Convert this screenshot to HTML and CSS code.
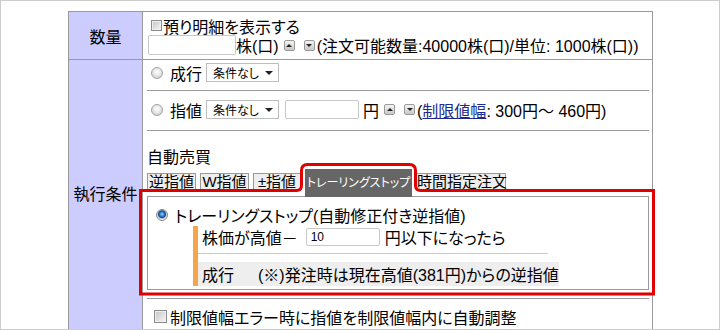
FILE: index.html
```html
<!DOCTYPE html>
<html lang="ja">
<head>
    <meta charset="UTF-8">
    <title>注文入力</title>
    <link rel="stylesheet" href="styles.css">
</head>
<body>
<div class="frame">
    <table class="order">
        <tr class="row-qty">
            <th>数量</th>
            <td>
                <div class="line line-top"><span class="chk"></span>預り明細を表示する</div>
                <div class="line line-qty">
                    <input class="txt qty-input" type="text">株(口)<span class="spin up"></span><span class="spin down"></span><span class="note">(注文可能数量:40000株(口)/単位: 1000株(口))</span>
                </div>
            </td>
        </tr>
        <tr class="row-exec">
            <th>執行条件</th>
            <td>
                <div class="sub sub-market">
                    <span class="radio"></span><span class="opt">成行</span><span class="select">条件なし<i></i></span>
                </div>
                <div class="sub sub-limit">
                    <span class="radio"></span><span class="opt">指値</span><span class="select">条件なし<i></i></span><input class="txt price-input" type="text"><span class="yen">円</span><span class="spin up"></span><span class="spin down"></span><span class="note">(<a href="#">制限値幅</a>: 300円～ 460円)</span>
                </div>
                <div class="sub sub-auto">
                    <div class="auto-title">自動売買</div>
                    <ul class="tabs">
                        <li class="tab-rev">逆指値</li>
                        <li class="tab-w">W指値</li>
                        <li class="tab-pm">±指値</li>
                        <li class="tab-trail on">トレーリングストップ</li>
                        <li class="tab-time">時間指定注文</li>
                    </ul>
                    <div class="panel">
                        <div class="panel-head"><span class="radio checked"></span>トレーリングストップ(自動修正付き逆指値)</div>
                        <div class="trail">
                            <div class="trail-line">株価が高値－<input class="txt trail-input" type="text" value="10">円以下になったら</div>
                            <div class="trail-sep"></div>
                            <div class="trail-exec"><span class="cond">成行</span><span>(※)発注時は現在高値(381円)からの逆指値</span></div>
                        </div>
                    </div>
                </div>
                <div class="sub sub-adjust"><span class="chk big"></span>制限値幅エラー時に指値を制限値幅内に自動調整</div>
            </td>
        </tr>
    </table>
    <svg class="highlight" width="720" height="330" viewBox="0 0 720 330">
        <path d="M140.5,294 L140.5,190.5 L296.5,190.5 Q301.5,190.5 301.5,185.5 L301.5,170.5 Q301.5,164.5 307.5,164.5 L409.5,164.5 Q415.5,164.5 415.5,170.5 L415.5,185.5 Q415.5,190.5 420.5,190.5 L653.5,190.5 L653.5,294 Z" fill="none" stroke="#e00000" stroke-width="3"/>
    </svg>
</div>
</body>
</html>
```

FILE: styles.css
```css
*{
    margin:0;
    padding:0;
    list-style:none;
}
body{
    font-family:"Liberation Sans","Noto Sans CJK JP",sans-serif;
    font-size:16px;
    color:#000;
    font-feature-settings:"palt";
}
.frame{
    position:relative;
    width:720px;
    height:330px;
    border:1px solid #ccc;
    box-sizing:border-box;
    overflow:hidden;
    background:#fff;
}
.order{
    border-collapse:separate;
    border-spacing:0;
    table-layout:fixed;
    width:585px;
    margin:10px 0 0 67px;
    border-top:1px solid #999;
    border-left:1px solid #999;
}
.order th,.order td{
    border-right:1px solid #999;
    border-bottom:1px solid #999;
    vertical-align:top;
}
.order th{
    width:73px;
    background:#ccf;
    font-weight:normal;
    font-size:16px;
    text-align:center;
    vertical-align:middle;
}
.row-qty td{
    padding:4px 3px 4px 5px;
}
.row-exec th{
    padding-bottom:4px;
}
.row-exec td{
    padding:0 3px 0 4px;
}
.line{
    display:flex;
    align-items:center;
    white-space:nowrap;
}
.line-top{
    height:19px;
}
.line-qty{
    height:20px;
}
.chk{
    width:11px;
    height:11px;
    box-sizing:border-box;
    border:1px solid #8c8c8c;
    background:linear-gradient(135deg,#c4c4c4,#f7f7f7);
    box-shadow:inset 0 0 0 1px #eee;
    margin:0 1px 0 3px;
}
.chk.big{
    width:13px;
    height:13px;
    margin-right:3px;
}
.txt{
    box-sizing:border-box;
    border:1px solid #c8c8c8;
    border-radius:2px;
    background:#fff;
    font:12px "Liberation Sans",sans-serif;
    padding:0 4px;
    outline:none;
}
.qty-input{
    width:88px;
    height:20px;
}
.price-input{
    width:74px;
    height:19px;
    margin-left:6px;
}
.trail-input{
    width:74px;
    height:18px;
    margin:0 5px 0 8px;
}
.spin{
    display:flex;
    align-items:center;
    justify-content:center;
    width:11px;
    height:11px;
    box-sizing:border-box;
    border:1px solid #9a9a9a;
    border-radius:2px;
    background:linear-gradient(#f4f4f4,#c8c8c8);
}
.spin.up{
    margin-left:5px;
}
.spin.down{
    margin-left:9px;
}
.spin.up::after{
    content:"";
    border-left:3px solid transparent;
    border-right:3px solid transparent;
    border-bottom:3px solid #222;
}
.spin.down::after{
    content:"";
    border-left:3px solid transparent;
    border-right:3px solid transparent;
    border-top:3px solid #222;
}
.note{
    margin-left:2px;
}
.note a{
    color:#1c2a8f;
    text-decoration:underline;
}
.sub{
    display:flex;
    align-items:center;
    white-space:nowrap;
    border-bottom:1px solid #999;
    padding-left:4px;
}
.sub-market{
    height:19px;
    padding-top:3px;
    padding-bottom:8px;
}
.sub-limit{
    height:19px;
    padding-top:9px;
    padding-bottom:11px;
}
.sub-auto{
    display:block;
    padding:17px 0 8px 0;
}
.sub-adjust{
    height:19px;
    padding-top:8px;
    padding-bottom:4px;
    border-bottom:none;
}
.radio{
    width:12px;
    height:12px;
    box-sizing:border-box;
    border:1px solid #a3a3a3;
    border-radius:50%;
    background:radial-gradient(circle at 50% 40%,#fff 0,#e8e8e8 45%,#c4c4c4 100%);
    margin-right:7px;
}
.radio.checked{
    border-color:#8a8a8a;
    background:radial-gradient(circle at 50% 42%,#a9dbff 0,#2c82d8 2px,#174d8c 3.5px,#cfcfcf 4.5px,#f2f2f2 6px);
}
.yen{
    margin-left:4px;
}
.select{
    display:flex;
    align-items:center;
    justify-content:space-between;
    width:73px;
    height:19px;
    box-sizing:border-box;
    border:1px solid #bdbdbd;
    background:#fff;
    font-size:12px;
    padding:0 5px 0 6px;
    margin-left:4px;
}
.select i{
    width:0;
    height:0;
    border-left:4px solid transparent;
    border-right:4px solid transparent;
    border-top:4px solid #222;
}
.auto-title{
    height:19px;
    line-height:19px;
}
.tabs{
    display:flex;
    align-items:flex-start;
    gap:4px;
    height:27px;
    margin-top:2px;
}
.tabs li{
    box-sizing:border-box;
    height:18px;
    margin-top:4px;
    border:1px solid #999;
    background:#eee;
    font-size:15px;
    line-height:16px;
    text-align:center;
    white-space:nowrap;
}
.tabs li.on{
    position:relative;
    height:28px;
    margin:0 0 -1px;
    border:none;
    background:#666;
    color:#fff;
    font-size:12px;
    line-height:28px;
}
.tab-rev,.tab-w{
    width:49px;
}
.tab-pm{
    width:48px;
}
.tab-trail{
    width:107px;
}
.tab-time{
    width:90px;
}
.panel{
    border:1px solid #999;
    padding:8px 0 3px 8px;
}
.panel-head{
    display:flex;
    align-items:center;
    height:19px;
    white-space:nowrap;
}
.trail{
    margin:2px 0 0 37px;
    border-left:5px solid #f5a54a;
}
.trail-line{
    display:flex;
    align-items:center;
    height:21px;
    padding-left:4px;
    white-space:nowrap;
}
.trail-sep{
    width:350px;
    height:1px;
    background:#ccc;
    margin:6px 0 8px;
}
.trail-exec{
    display:flex;
    align-items:center;
    width:fit-content;
    height:24px;
    padding-left:4px;
    background:#eee;
    white-space:nowrap;
}
.trail-exec .cond{
    margin-right:24px;
}
.highlight{
    position:absolute;
    left:-1px;
    top:-1px;
    pointer-events:none;
}
```
